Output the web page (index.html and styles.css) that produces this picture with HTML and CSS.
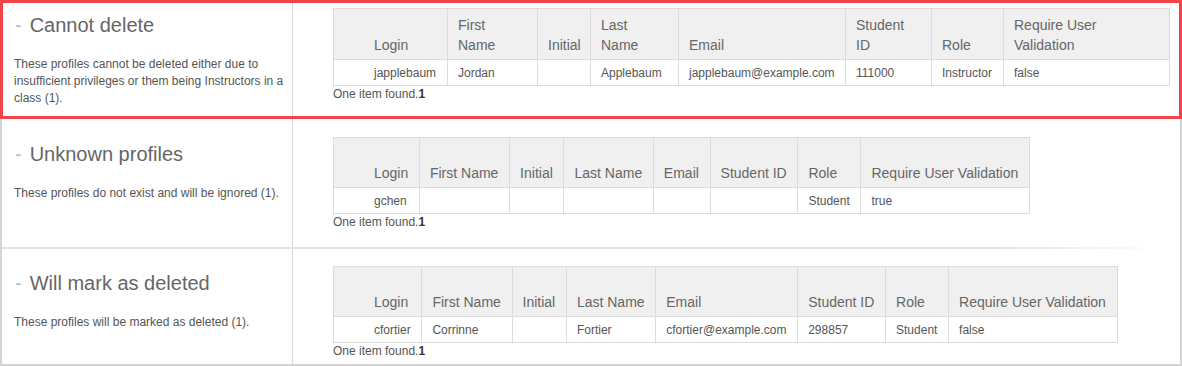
FILE: index.html
```html
<!DOCTYPE html>
<html lang="en">
<head>
<meta charset="utf-8">
<title>Delete profiles</title>
<link rel="stylesheet" href="styles.css">
</head>
<body>
<div class="panel">
  <section class="group group--flagged">
    <div class="info">
      <h2 class="title"><span class="dash">-</span>Cannot delete</h2>
      <p class="desc">These profiles cannot be deleted either due to insufficient privileges or them being Instructors in a class (1).</p>
    </div>
    <div class="listing">
      <table class="grid grid--fixed">
        <colgroup>
          <col class="w-login"><col class="w-first"><col class="w-initial"><col class="w-last">
          <col class="w-email"><col class="w-sid"><col class="w-role"><col class="w-ruv">
        </colgroup>
        <thead>
          <tr><th class="login">Login</th><th>First<br>Name</th><th>Initial</th><th>Last<br>Name</th><th>Email</th><th>Student<br>ID</th><th>Role</th><th>Require User<br>Validation</th></tr>
        </thead>
        <tbody>
          <tr><td class="login">japplebaum</td><td>Jordan</td><td></td><td>Applebaum</td><td>japplebaum@example.com</td><td>111000</td><td>Instructor</td><td>false</td></tr>
        </tbody>
      </table>
      <div class="count">One item found.<b>1</b></div>
    </div>
  </section>

  <section class="group group--unknown">
    <div class="info">
      <h2 class="title"><span class="dash">-</span>Unknown profiles</h2>
      <p class="desc">These profiles do not exist and will be ignored (1).</p>
    </div>
    <div class="listing">
      <table class="grid grid--auto">
        <thead>
          <tr><th class="login">Login</th><th>First Name</th><th>Initial</th><th>Last Name</th><th>Email</th><th>Student ID</th><th>Role</th><th>Require User Validation</th></tr>
        </thead>
        <tbody>
          <tr><td class="login">gchen</td><td></td><td></td><td></td><td></td><td></td><td>Student</td><td>true</td></tr>
        </tbody>
      </table>
      <div class="count">One item found.<b>1</b></div>
    </div>
  </section>

  <div class="sep"></div>

  <section class="group group--deleted">
    <div class="info">
      <h2 class="title"><span class="dash">-</span>Will mark as deleted</h2>
      <p class="desc">These profiles will be marked as deleted (1).</p>
    </div>
    <div class="listing">
      <table class="grid grid--auto">
        <thead>
          <tr><th class="login">Login</th><th>First Name</th><th>Initial</th><th>Last Name</th><th>Email</th><th>Student ID</th><th>Role</th><th>Require User Validation</th></tr>
        </thead>
        <tbody>
          <tr><td class="login">cfortier</td><td>Corrinne</td><td></td><td>Fortier</td><td>cfortier@example.com</td><td>298857</td><td>Student</td><td>false</td></tr>
        </tbody>
      </table>
      <div class="count">One item found.<b>1</b></div>
    </div>
  </section>
</div>
</body>
</html>
```
FILE: styles.css
```css
html, body {
  margin: 0;
  background: #fff;
}

body {
  font-family: "Liberation Sans", Arial, sans-serif;
}

.panel {
  width: 1182px;
  height: 366px;
  box-sizing: border-box;
  border: 2px solid #d4d4d4;
  border-top: 0;
}

.group {
  display: flex;
  position: relative;
  box-sizing: border-box;
  --top: 18px;
}

.group--flagged {
  height: 119px;
  --top: 8px;
}

.group--flagged::after {
  content: "";
  position: absolute;
  top: 0;
  left: -2px;
  right: -2px;
  bottom: 0;
  border: 3px solid #f0434a;
  pointer-events: none;
}

.group--unknown {
  height: 128px;
  --top: 18px;
}

.group--deleted {
  height: 115px;
  --top: 17px;
}

.info {
  flex: none;
  width: 291px;
  box-sizing: border-box;
  border-right: 1px solid #d6d6d6;
  padding: var(--top) 5px 0 12px;
}

.listing {
  flex: 1;
  min-width: 0;
  padding: var(--top) 10px 0 40px;
}

.title {
  margin: 5px 0 0 1px;
  font-size: 20px;
  line-height: 24px;
  font-weight: normal;
  color: #666;
}

.dash {
  color: #b9b9b9;
  margin-right: 8px;
}

.desc {
  margin: 19px 0 0;
  font-size: 12px;
  line-height: 17px;
  color: #555;
}

.sep {
  height: 2px;
  background: linear-gradient(to right, #e2e2e2 0%, #e2e2e2 84%, rgba(226, 226, 226, 0) 98.6%);
}

.grid {
  border-collapse: collapse;
}

.grid th,
.grid td {
  border: 1px solid #dcdcdc;
  padding: 0 10px;
  text-align: left;
  white-space: nowrap;
}

.grid--auto th,
.grid--auto td {
  padding-right: 10.7px;
}

.grid th {
  background: #f0f0f0;
  font-weight: normal;
  font-size: 14px;
  line-height: 20px;
  color: #666;
  vertical-align: bottom;
  padding-top: 6px;
  padding-bottom: 4px;
}

.grid thead tr {
  height: 50px;
}

.grid td {
  font-size: 12px;
  color: #555;
  vertical-align: middle;
}

.grid tbody tr {
  height: 26px;
}

.grid .login {
  padding-left: 40px;
}

.grid--fixed {
  table-layout: fixed;
  width: 100%;
}

.w-login { width: 114px; }
.w-first { width: 90px; }
.w-initial { width: 53px; }
.w-last { width: 88px; }
.w-email { width: 167px; }
.w-sid { width: 86px; }
.w-role { width: 72px; }
.w-ruv { width: 166px; }

.count {
  margin-top: 1px;
  font-size: 12px;
  line-height: 14px;
  color: #555;
}

.count b {
  color: #333;
}
```
